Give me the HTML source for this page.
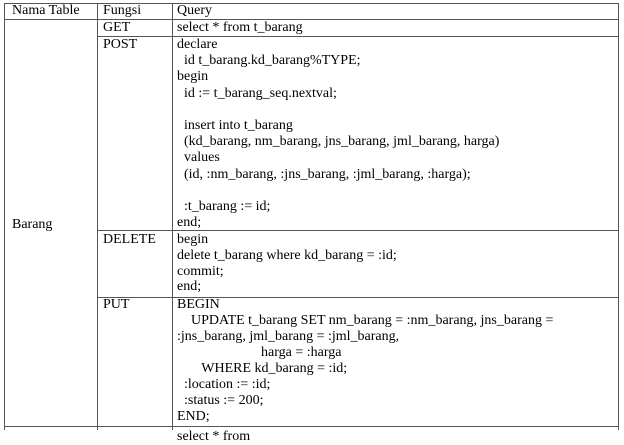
<!DOCTYPE html>
<html><head><style>
body{margin:0;width:624px;height:430px;background:#fff;position:relative;overflow:hidden;font-family:"Liberation Serif",serif;font-size:14px;color:#000}
.h{position:absolute;background:#555;height:1px}
.v{position:absolute;background:#555;width:1px}
.t{position:absolute;white-space:pre;line-height:16px}
</style></head><body>
<div class="h" style="left:4px;width:615px;top:3px"></div>
<div class="h" style="left:4px;width:615px;top:19px"></div>
<div class="h" style="left:97px;width:522px;top:36px"></div>
<div class="h" style="left:97px;width:522px;top:230px"></div>
<div class="h" style="left:97px;width:522px;top:297px"></div>
<div class="h" style="left:4px;width:615px;top:426px"></div>
<div class="v" style="left:4px;top:3px;height:427px"></div>
<div class="v" style="left:97px;top:3px;height:427px"></div>
<div class="v" style="left:172px;top:3px;height:427px"></div>
<div class="v" style="left:618px;top:3px;height:427px"></div>

<div class="t" style="left:12px;top:3px">Nama Table</div>
<div class="t" style="left:103px;top:3px">Fungsi</div>
<div class="t" style="left:177px;top:3px">Query</div>
<div class="t" style="left:103px;top:20px">GET</div>
<div class="t" style="left:177px;top:20px">select * from t_barang</div>
<div class="t" style="left:103px;top:37px">POST</div>
<div class="t" style="left:12px;top:217px">Barang</div>
<div class="t" style="left:177px;top:37px;line-height:16.2px">declare
  id t_barang.kd_barang%TYPE;
begin
  id := t_barang_seq.nextval;

  insert into t_barang
  (kd_barang, nm_barang, jns_barang, jml_barang, harga)
  values
  (id, :nm_barang, :jns_barang, :jml_barang, :harga);

  :t_barang := id;
end;</div>
<div class="t" style="left:103px;top:232px">DELETE</div>
<div class="t" style="left:177px;top:232px;line-height:15.8px">begin
delete t_barang where kd_barang = :id;
commit;
end;</div>
<div class="t" style="left:103px;top:297px">PUT</div>
<div class="t" style="left:177px;top:297px;line-height:16px">BEGIN
    UPDATE t_barang SET nm_barang = :nm_barang, jns_barang =
:jns_barang, jml_barang = :jml_barang,
                        harga = :harga
       WHERE kd_barang = :id;
  :location := :id;
  :status := 200;
END;</div>
<div class="t" style="left:177px;top:429px">select * from</div>
</body></html>
